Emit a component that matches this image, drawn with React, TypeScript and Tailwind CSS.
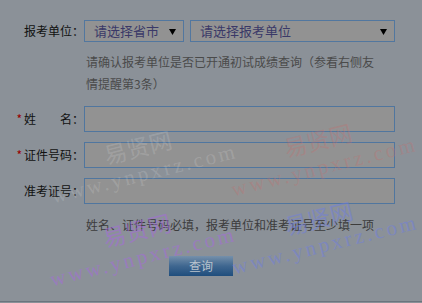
import React from "react";

const Select = ({ text, className }: { text: string; className: string }) => {
  return (
    <div
      className={`flex h-[22px] items-center justify-between border border-[#52779f] bg-[#929292] pl-[9px] pr-[7px] text-[13px] text-[#3a3968] ${className}`}
    >
      <span>{text}</span>
      <svg width="7" height="7" viewBox="0 0 7 7" className="mt-[1px]">
        <path d="M0 1h7L3.5 7z" fill="#000" />
      </svg>
    </div>
  );
};

const Field = ({ label, required }: { label: string; required?: boolean }) => {
  return (
    <div className="flex items-center">
      <div className="flex w-[84px] items-center justify-end text-[12px] text-[#111]">
        {required && <span className="mr-[2px] text-[#9a0000]">*</span>}
        <span>{label}</span>
      </div>
      <div className="h-[26px] w-[311px] border border-[#50769f] bg-[#929292]" />
    </div>
  );
};

// site watermark, faded and tilted over the form
const Watermark = ({
  color,
  className,
}: {
  color: string;
  className: string;
}) => {
  return (
    <div
      className={`pointer-events-none absolute flex w-[190px] -rotate-[14deg] flex-col items-center ${color} ${className}`}
    >
      <span className="text-[23px] leading-[28px]">易贤网</span>
      <span className="font-['Liberation_Serif',serif] text-[21px] leading-[28px] tracking-[3px]">
        www.ynpxrz.com
      </span>
    </div>
  );
};

export default function App() {
  return (
    <div className="relative h-[303px] w-[422px] overflow-hidden bg-[#8b9198] font-['Noto_Sans_CJK_SC',sans-serif]">
      <div className="flex h-[302px] flex-col border-b border-[#6b747d] pt-[20px]">
        <div className="flex items-center">
          <div className="w-[84px] text-right text-[12px] text-[#111]">
            报考单位：
          </div>
          <Select text="请选择省市" className="w-[100px]" />
          <Select text="请选择报考单位" className="ml-[6px] w-[205px]" />
        </div>

        <p className="ml-[86px] mt-[9px] w-[294px] text-[12px] leading-[22px] text-[#4a4a4a]">
          请确认报考单位是否已开通初试成绩查询（参看右侧友情提醒第3条）
        </p>

        <div className="mt-[11px] flex flex-col gap-[10px]">
          <Field label="姓　　名：" required />
          <Field label="证件号码：" required />
          <Field label="准考证号：" />
        </div>

        <p className="ml-[86px] mt-[10px] text-[12px] leading-[22px] text-[#3c3c3c]">
          姓名、证件号码必填，报考单位和准考证号至少填一项
        </p>

        <div className="ml-[169px] mt-[20px] flex h-[20px] w-[64px] items-center justify-center bg-gradient-to-b from-[#7590ab] via-[#3f6790] to-[#1f4e7d] text-[12px] text-[#b9c3cd]">
          查询
        </div>
      </div>

      <Watermark color="text-white/15" className="left-[46px] top-[132px]" />
      <Watermark color="text-[#c86a6a]/30" className="left-[226px] top-[125px]" />
      <Watermark color="text-[#a868e0]/50" className="left-[45px] top-[215px]" />
      <Watermark color="text-[#6f7ee0]/50" className="left-[227px] top-[203px]" />
    </div>
  );
}
